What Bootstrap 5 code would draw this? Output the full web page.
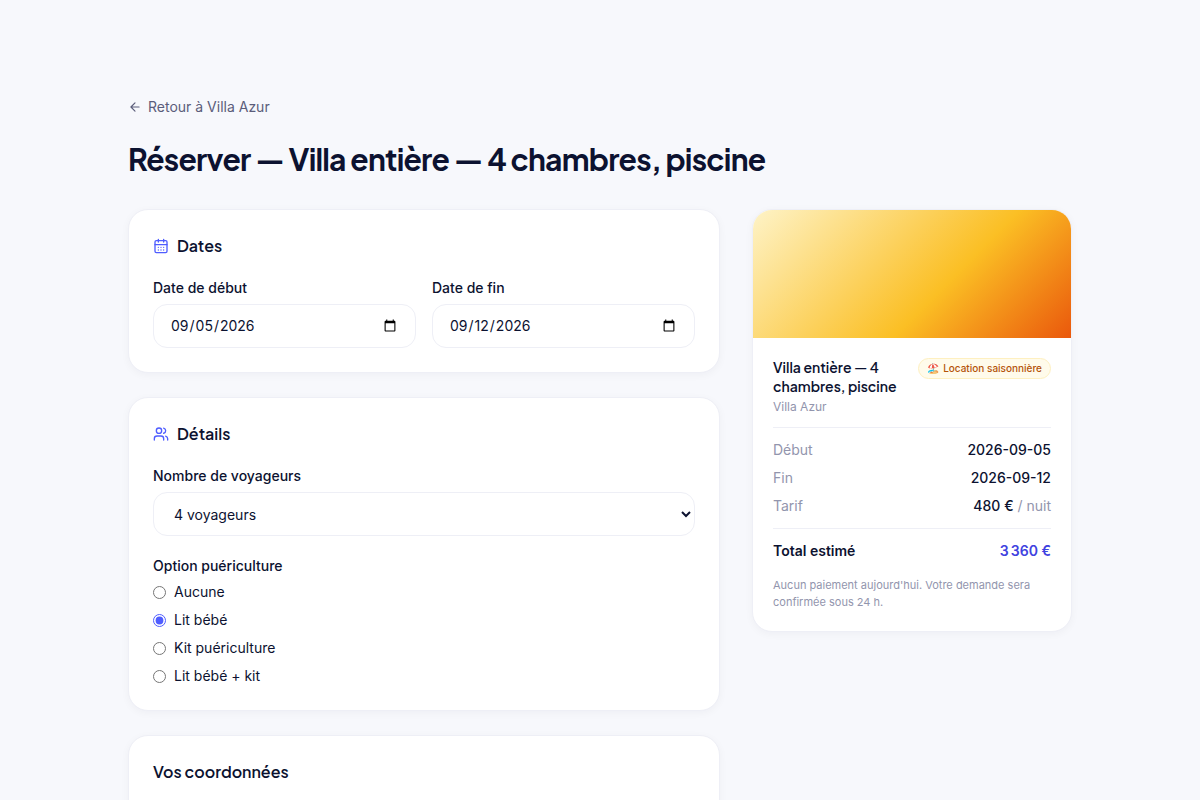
<!DOCTYPE html>
<html lang="fr">
<head>
<meta charset="utf-8">
<meta name="viewport" content="width=device-width, initial-scale=1">
<title>Réserver — Villa entière</title>
<link href="https://cdn.jsdelivr.net/npm/bootstrap@5.3.0/dist/css/bootstrap.min.css" rel="stylesheet">
<style>
  :root { --ink:#0c1230; --soft:#5b5d7a; --faint:#9295ad; --line:#eeeff6; --brand:#4f5dff; --brand-deep:#3f42e0; }
  body { background:#f7f8fc; color:var(--ink); font-family:Inter,sans-serif; font-size:14px; line-height:20px; }
  .page { max-width:992px; padding:96px 24px; }
  .back-link { color:var(--soft); gap:6px; line-height:21px; width:fit-content; }
  h1, h2, .summary-name { font-family:"Plus Jakarta Sans","DM Sans",Inter,sans-serif; }
  h1 { font-size:30px; line-height:36px; font-weight:700; letter-spacing:-0.025em; margin:24px 0 32px; }
  h2 { font-size:16px; line-height:24px; font-weight:600; margin:0 0 20px; }
  .booking { display:grid; grid-template-columns:minmax(0,1fr); gap:32px; align-items:start; }
  @media (min-width:992px) { .booking { grid-template-columns:minmax(0,1fr) 320px; } }
  .panel { background:#fff; border:1px solid var(--line); border-radius:20px; box-shadow:0 2px 8px rgba(12,18,48,.04); }
  .panel-form { padding:24px; }
  .form-label { font-weight:500; margin-bottom:6px; display:block; }
  .field { height:44px; padding:0 16px; font-size:14px; line-height:20px; border:1px solid var(--line); border-radius:14px; color:var(--ink); background:#fff; }
  .field::-webkit-datetime-edit-month-field,
  .field::-webkit-datetime-edit-day-field,
  .field::-webkit-datetime-edit-year-field { padding:0 1px; }
  select.field { appearance:auto; background-image:none; }
  input[type=radio] { width:13px; height:13px; margin:0; accent-color:var(--brand); }
  legend { font-size:14px; line-height:20px; }
  .cover { height:128px; background:linear-gradient(135deg,#fef3c7 0%,#fbbf24 60%,#ea580c 100%); }
  .summary-body { padding:20px; }
  .summary-name { font-size:14px; line-height:19px; font-weight:600; }
  .place { font-size:12px; line-height:16px; margin-top:3px; }
  .faint { color:var(--faint); }
  .tag { font-size:10px; line-height:15px; font-weight:500; color:#b45309; background:#fffbeb; border:1px solid #fef0c0; border-radius:20px; padding:2px 8px; }
  .rule { border-top:1px solid var(--line); padding-top:12px; margin-top:12px; }
  .total { color:var(--brand-deep); }
  .note { font-size:11px; line-height:17px; margin-top:16px; }
</style>
</head>
<body>
<main class="page container-fluid mx-auto">
  <a href="#" class="back-link d-flex align-items-center text-decoration-none">
    <svg width="14" height="14" viewBox="0 0 24 24" fill="none" stroke="currentColor" stroke-width="2" stroke-linecap="round" stroke-linejoin="round" aria-hidden="true"><path d="m12 19-7-7 7-7M19 12H5"/></svg>
    Retour à Villa Azur
  </a>
  <h1>Réserver — Villa entière — 4 chambres, piscine</h1>
  <div class="booking">
    <form class="d-flex flex-column gap-4">
      <section class="panel panel-form">
        <h2 class="d-flex align-items-center gap-2">
          <svg width="16" height="16" viewBox="0 0 24 24" fill="none" stroke="#4f5dff" stroke-width="2" stroke-linecap="round" stroke-linejoin="round" aria-hidden="true"><path d="M8 2v4M16 2v4"/><rect width="18" height="18" x="3" y="4" rx="2"/><path d="M3 10h18M8 14h.01M12 14h.01M16 14h.01M8 18h.01M12 18h.01M16 18h.01"/></svg>
          Dates
        </h2>
        <div class="row g-3">
          <div class="col-sm-6">
            <label class="form-label" for="start">Date de début</label>
            <input class="form-control field" type="date" id="start" value="2026-09-05">
          </div>
          <div class="col-sm-6">
            <label class="form-label" for="end">Date de fin</label>
            <input class="form-control field" type="date" id="end" value="2026-09-12">
          </div>
        </div>
      </section>
      <section class="panel panel-form">
        <h2 class="d-flex align-items-center gap-2">
          <svg width="16" height="16" viewBox="0 0 24 24" fill="none" stroke="#4f5dff" stroke-width="2" stroke-linecap="round" stroke-linejoin="round" aria-hidden="true"><path d="M16 21v-2a4 4 0 0 0-4-4H6a4 4 0 0 0-4 4v2"/><circle cx="9" cy="7" r="4"/><path d="M22 21v-2a4 4 0 0 0-3-3.87M16 3.13a4 4 0 0 1 0 7.75"/></svg>
          Détails
        </h2>
        <label class="form-label" for="guests">Nombre de voyageurs</label>
        <select class="form-select field" id="guests"><option>4 voyageurs</option></select>
        <fieldset class="mt-3 pt-1">
          <legend class="form-label">Option puériculture</legend>
          <div class="d-flex flex-column align-items-start gap-2">
            <label class="d-flex align-items-center gap-2"><input type="radio" name="baby">Aucune</label>
            <label class="d-flex align-items-center gap-2"><input type="radio" name="baby" checked>Lit bébé</label>
            <label class="d-flex align-items-center gap-2"><input type="radio" name="baby">Kit puériculture</label>
            <label class="d-flex align-items-center gap-2"><input type="radio" name="baby">Lit bébé + kit</label>
          </div>
        </fieldset>
      </section>
      <section class="panel panel-form">
        <h2>Vos coordonnées</h2>
      </section>
    </form>
    <aside class="panel overflow-hidden">
      <div class="cover"></div>
      <div class="summary-body">
        <div class="d-flex align-items-start justify-content-between gap-2">
          <div>
            <div class="summary-name">Villa entière — 4 chambres, piscine</div>
            <div class="place faint">Villa Azur</div>
          </div>
          <span class="tag d-inline-flex gap-1 text-nowrap flex-shrink-0"><span>🏖️</span>Location saisonnière</span>
        </div>
        <div class="rule d-flex flex-column gap-2">
          <div class="d-flex justify-content-between"><span class="faint">Début</span><span class="fw-medium">2026-09-05</span></div>
          <div class="d-flex justify-content-between"><span class="faint">Fin</span><span class="fw-medium">2026-09-12</span></div>
          <div class="d-flex justify-content-between"><span class="faint">Tarif</span><span><span class="fw-medium">480 €</span> <span class="faint">/ nuit</span></span></div>
        </div>
        <div class="rule d-flex justify-content-between fw-semibold"><span>Total estimé</span><span class="total">3&#8239;360 €</span></div>
        <p class="note faint mb-0">Aucun paiement aujourd'hui. Votre demande sera confirmée sous 24 h.</p>
      </div>
    </aside>
  </div>
</main>
<script src="https://cdn.jsdelivr.net/npm/bootstrap@5.3.0/dist/js/bootstrap.bundle.min.js"></script>
</body>
</html>
